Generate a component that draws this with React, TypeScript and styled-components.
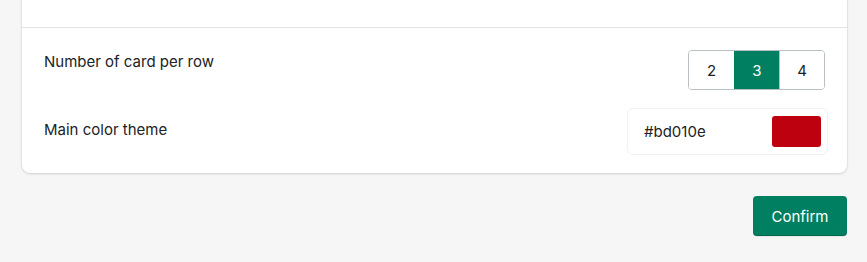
import React, { useState } from "react";
import styled, { createGlobalStyle } from "styled-components";

const GlobalStyle = createGlobalStyle`
  html, body {
    margin: 0;
    padding: 0;
    background: #f6f6f7;
    font-family: Inter, "Noto Sans", sans-serif;
    color: #202223;
  }
`;

const Page = styled.div`
  width: 867px;
  height: 262px;
  overflow: hidden;
  padding: 0 20px 0 22px;
  box-sizing: border-box;
  display: flex;
  flex-direction: column;
`;

const Card = styled.div`
  margin-top: -12px;
  background: #fff;
  border-radius: 8px;
  box-shadow: 0 0 0 1px rgba(63, 63, 68, 0.05), 0 1px 3px rgba(63, 63, 68, 0.15);
`;

const TopSection = styled.div`
  height: 39px;
  border-bottom: 1px solid #e1e3e5;
`;

const Section = styled.div`
  padding: 22px 22px 18px;
  display: flex;
  flex-direction: column;
  gap: 18px;
`;

const Row = styled.div<{ $offset: number }>`
  display: flex;
  justify-content: space-between;
  align-items: flex-start;
  > span {
    font-size: 15px;
    line-height: 20px;
    margin-top: ${(p) => p.$offset}px;
  }
`;

const Group = styled.div`
  display: flex;
  border: 1px solid #babfc3;
  border-radius: 4px;
  overflow: hidden;
`;

const Seg = styled.button<{ $active: boolean }>`
  width: 45px;
  height: 38px;
  border: none;
  border-left: 1px solid ${(p) => (p.$active ? "#008060" : "#babfc3")};
  &:first-child {
    border-left: none;
  }
  background: ${(p) => (p.$active ? "#008060" : "#fff")};
  color: ${(p) => (p.$active ? "#fff" : "#202223")};
  font-family: inherit;
  font-size: 15px;
  padding: 0;
  cursor: pointer;
`;

const ColorField = styled.div`
  width: 201px;
  height: 47px;
  box-sizing: border-box;
  margin-right: -3px;
  border: 1px solid #f1f2f3;
  border-radius: 6px;
  display: flex;
  align-items: center;
  justify-content: space-between;
  padding: 0 6px 0 16px;
  font-size: 15px;
`;

const Swatch = styled.div<{ $color: string }>`
  width: 49px;
  height: 31px;
  border-radius: 3px;
  background: ${(p) => p.$color};
`;

const Footer = styled.div`
  display: flex;
  justify-content: flex-end;
  padding-top: 23px;
`;

const PrimaryButton = styled.button`
  width: 94px;
  height: 40px;
  border: none;
  border-radius: 4px;
  background: #008060;
  color: #fff;
  font-family: inherit;
  font-size: 15px;
  box-shadow: inset 0 -1px 0 rgba(0, 0, 0, 0.2), 0 1px 0 rgba(0, 0, 0, 0.05);
  cursor: pointer;
`;

export default function App() {
  const [perRow, setPerRow] = useState(3);
  const color = "#bd010e";
  return (
    <>
      <GlobalStyle />
      <Page>
        <Card>
          <TopSection />
          <Section>
            <Row $offset={2}>
              <span>Number of card per row</span>
              <Group>
                {[2, 3, 4].map((n) => (
                  <Seg key={n} $active={n === perRow} onClick={() => setPerRow(n)}>
                    {n}
                  </Seg>
                ))}
              </Group>
            </Row>
            <Row $offset={12}>
              <span>Main color theme</span>
              <ColorField>
                <span>{color}</span>
                <Swatch $color={color} />
              </ColorField>
            </Row>
          </Section>
        </Card>
        <Footer>
          <PrimaryButton>Confirm</PrimaryButton>
        </Footer>
      </Page>
    </>
  );
}
